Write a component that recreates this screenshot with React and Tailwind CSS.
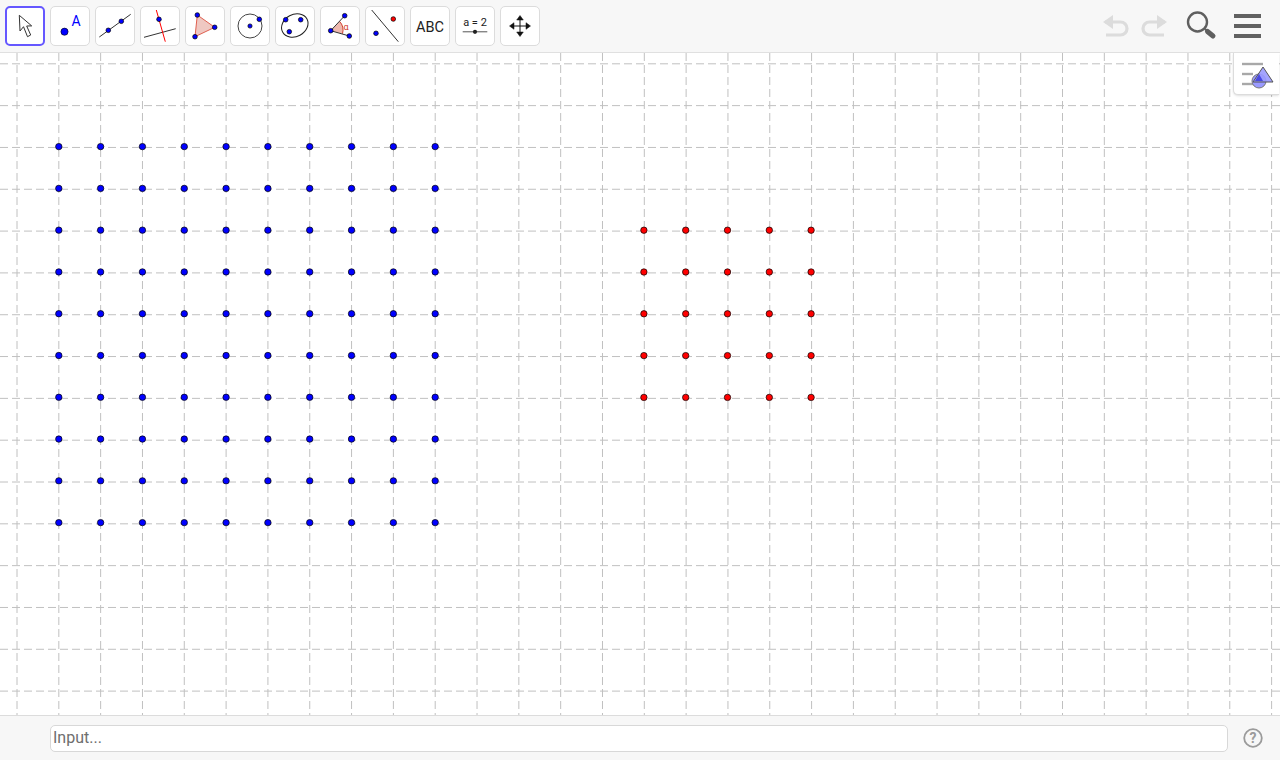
import React from "react";

const BLUE = "#0000ff";
const RED = "#ff0000";
const STEP = 41.82;

// blue/red points sit on the grid lines
const vLines = Array.from({ length: 31 }, (_, i) => 17 + i * STEP);
const hLines = Array.from({ length: 16 }, (_, i) => 10.8 + i * STEP);

const Dot = ({ x, y, fill = BLUE, r = 3.2 }) => (
  <circle cx={x} cy={y} r={r} fill={fill} stroke="#000" strokeWidth="0.7" />
);

const tools = [
  <path d="M14.3 9.3 15 25l3.5-4.3 4 10 3.2-1.7-4-9 5-.1z" fill="#fff" stroke="#333" strokeWidth="1" strokeLinejoin="round" />,
  <>
    <circle cx="14.5" cy="25.7" r="3.6" fill={BLUE} stroke="#000" strokeWidth="0.6" />
    <text x="26" y="20" textAnchor="middle" fontSize="14" fill={BLUE} fontFamily="Roboto, sans-serif">A</text>
  </>,
  <>
    <line x1="4.3" y1="31" x2="35.7" y2="8.3" stroke="#333" strokeWidth="1" />
    <Dot x={13.3} y={24.3} r={2.3} />
    <Dot x={26.3} y={15.3} r={2.3} />
  </>,
  <>
    <line x1="4" y1="31.3" x2="35.7" y2="22.7" stroke="#333" strokeWidth="1" />
    <line x1="16.3" y1="4" x2="25.3" y2="35.7" stroke={RED} strokeWidth="1" />
    <Dot x={19} y={13.3} r={2.3} />
  </>,
  <>
    <polygon points="12.3,9 29.7,21.3 10,30.7" fill="#e8b0a8" fillOpacity="0.7" stroke="#e06050" strokeWidth="1" />
    <Dot x={12.3} y={9} r={2.3} />
    <Dot x={29.7} y={21.3} r={2.3} />
    <Dot x={10} y={30.7} r={2.3} />
  </>,
  <>
    <circle cx="20" cy="20" r="12" fill="none" stroke="#444" strokeWidth="1" />
    <Dot x={20} y={20} r={2.1} />
    <Dot x={29.3} y={13.3} r={2.3} />
  </>,
  <>
    <ellipse cx="19.8" cy="19.5" rx="13.8" ry="11" transform="rotate(-28 19.8 19.5)" fill="none" stroke="#222" strokeWidth="1" />
    <Dot x={10.7} y={13.7} r={2.3} />
    <Dot x={25.7} y={13.7} r={2.3} />
    <Dot x={14.3} y={25.7} r={2.3} />
  </>,
  <>
    <path d="M10.7 24.7 19.5 15.3A13 13 0 0 1 22.5 27.7z" fill="#eeb8ae" />
    <path d="M19.5 15.3A13 13 0 0 1 22.5 27.7" fill="none" stroke="#d04030" strokeWidth="1" />
    <line x1="10.7" y1="24.7" x2="24.7" y2="9.7" stroke="#333" strokeWidth="1" />
    <line x1="10.7" y1="24.7" x2="29.3" y2="30" stroke="#333" strokeWidth="1" />
    <Dot x={10.7} y={24.7} r={2.3} />
    <Dot x={24.7} y={9.7} r={2.3} />
    <Dot x={29.3} y={30} r={2.3} />
    <text x="26" y="24" textAnchor="middle" fontSize="9" fill="#d04030" fontFamily="Roboto, sans-serif">α</text>
  </>,
  <>
    <line x1="6.7" y1="4" x2="33.3" y2="35.7" stroke="#333" strokeWidth="1" />
    <Dot x={28.3} y={13} r={2.3} fill={RED} />
    <Dot x={11} y={27.3} r={2.3} />
  </>,
  <text x="20" y="25.5" textAnchor="middle" fontSize="14.5" fill="#222" fontFamily="Roboto, sans-serif">ABC</text>,
  <>
    <text x="20" y="19.5" textAnchor="middle" fontSize="11" fill="#222" fontFamily="Roboto, sans-serif">a = 2</text>
    <line x1="7.7" y1="25.8" x2="32.3" y2="25.8" stroke="#555" strokeWidth="1" />
    <circle cx="20" cy="25.8" r="2.1" fill="#222" />
  </>,
  <g fill="#111" stroke="#111">
    <line x1="20" y1="12" x2="20" y2="28" strokeWidth="1" />
    <line x1="12" y1="20" x2="28" y2="20" strokeWidth="1" />
    <polygon points="20,9.5 16.7,14 23.3,14" strokeWidth="0.5" />
    <polygon points="20,30.5 16.7,26 23.3,26" strokeWidth="0.5" />
    <polygon points="9.5,20 14,16.7 14,23.3" strokeWidth="0.5" />
    <polygon points="30.5,20 26,16.7 26,23.3" strokeWidth="0.5" />
  </g>,
];

const ToolButton = ({ active, children }) => (
  <button
    className={
      active
        ? "w-10 h-10 shrink-0 rounded-[5px] bg-white border-2 border-[#6557ff]"
        : "w-10 h-10 shrink-0 rounded-[5px] bg-white border border-[#dcdcdc]"
    }
  >
    <svg width="40" height="40" viewBox="0 0 40 40" className={active ? "-m-[2px]" : "-m-px"}>
      {children}
    </svg>
  </button>
);

const Toolbar = () => (
  <div className="h-[53px] shrink-0 flex items-center justify-between pl-[5px] pr-[19px] bg-[#f7f7f7] border-b border-[#e0e0e0]">
    <div className="flex gap-[5px]">
      {tools.map((icon, i) => (
        <ToolButton key={i} active={i === 0}>
          {icon}
        </ToolButton>
      ))}
    </div>
    <div className="flex items-center">
      <svg width="30" height="26" viewBox="0 0 30 26" className="mr-[6px]">
        <path d="M3 9h15.5a6.5 6.5 0 0 1 0 13H4" fill="none" stroke="#dcdcdc" strokeWidth="3.2" />
        <polygon points="1,9 11,2 11,16" fill="#dcdcdc" />
      </svg>
      <svg width="30" height="26" viewBox="0 0 30 26" className="mr-[17px]">
        <path d="M27 9H11.5a6.5 6.5 0 0 0 0 13H26" fill="none" stroke="#dcdcdc" strokeWidth="3.2" />
        <polygon points="29,9 19,2 19,16" fill="#dcdcdc" />
      </svg>
      <svg width="32" height="32" viewBox="0 0 32 32" className="mr-[17px]">
        <circle cx="12.5" cy="12" r="9.5" fill="none" stroke="#5f5f5f" strokeWidth="2.4" />
        <line x1="20" y1="19" x2="22.5" y2="21.5" stroke="#5f5f5f" strokeWidth="2" />
        <line x1="22.5" y1="21.5" x2="28" y2="26" stroke="#5f5f5f" strokeWidth="5" strokeLinecap="round" />
      </svg>
      <div className="flex flex-col gap-[6px] w-[27px]">
        <div className="h-1 bg-[#616161]" />
        <div className="h-1 bg-[#616161]" />
        <div className="h-1 bg-[#616161]" />
      </div>
    </div>
  </div>
);

const Board = () => (
  <svg width="1280" height="662" viewBox="0 53 1280 662" className="block">
    <g stroke="#c0c0c0" strokeWidth="1" strokeDasharray="8 4">
      {vLines.map((x) => (
        <line key={x} x1={x} y1="53" x2={x} y2="715" />
      ))}
      {hLines.map((y) => (
        <line key={y} x1="0" y1={y + 53} x2="1280" y2={y + 53} />
      ))}
    </g>
    {Array.from({ length: 10 }, (_, r) =>
      Array.from({ length: 10 }, (_, c) => (
        <Dot key={`b${r}-${c}`} x={58.8 + c * STEP} y={146.6 + r * 41.78} />
      ))
    )}
    {Array.from({ length: 5 }, (_, r) =>
      Array.from({ length: 5 }, (_, c) => (
        <Dot key={`r${r}-${c}`} x={643.9 + c * 41.8} y={230.2 + r * 41.8} fill={RED} />
      ))
    )}
  </svg>
);

const StyleBarButton = () => (
  <div className="absolute top-0 right-px w-[46px] h-[42px] bg-white rounded-bl-[5px] border-l border-b border-[#dcdcdc] shadow-sm flex items-center justify-center">
    <svg width="40" height="32" viewBox="0 0 40 32">
      <g stroke="#a8a8a8" strokeWidth="2.4">
        <line x1="5" y1="6" x2="26" y2="6" strokeDasharray="21 0" />
        <line x1="5" y1="16" x2="16" y2="16" />
        <line x1="5" y1="26" x2="16" y2="26" />
      </g>
      <circle cx="22" cy="23" r="7" fill="#9a9aff" stroke="#777" strokeWidth="1" />
      <polygon points="26,9 36,24 16,24" fill="#9a9aff" fillOpacity="0.9" stroke="#555" strokeWidth="1" />
      <path d="M22 16 26 23H18z" fill="#4a4ae0" />
    </svg>
  </div>
);

const InputBar = () => (
  <div className="h-[45px] shrink-0 flex items-center pl-[50px] pr-[17px] bg-[#f7f7f7] border-t border-[#dcdcdc]">
    <div className="flex-1 h-[27px] bg-white border border-[#d8d8d8] rounded-[5px] flex items-center pl-[2px] text-[16px] text-[#6e6e6e] font-['Roboto',sans-serif]">
      Input...
    </div>
    <svg width="20" height="20" viewBox="0 0 20 20" className="ml-[15px]">
      <circle cx="10" cy="10" r="8.8" fill="none" stroke="#9b9b9b" strokeWidth="1.8" />
      <text x="10" y="15" textAnchor="middle" fontSize="14" fontWeight="700" fill="#9b9b9b" fontFamily="Roboto, sans-serif">?</text>
    </svg>
  </div>
);

export default function App() {
  return (
    <div className="w-[1280px] h-[760px] flex flex-col overflow-hidden bg-white">
      <Toolbar />
      <div className="relative flex-1 overflow-hidden">
        <Board />
        <StyleBarButton />
      </div>
      <InputBar />
    </div>
  );
}
